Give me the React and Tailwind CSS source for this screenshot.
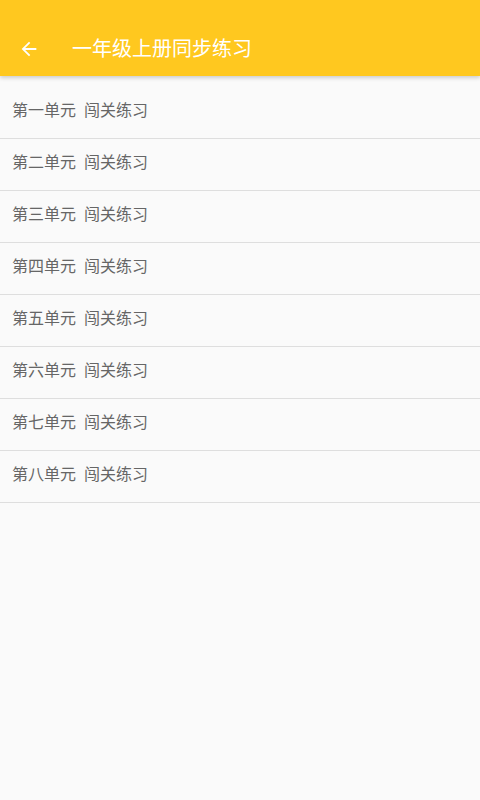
const units = ["一", "二", "三", "四", "五", "六", "七", "八"];

function BackArrow() {
  return (
    <svg viewBox="0 0 24 24" className="w-[22px] h-[22px]" fill="white">
      <path d="M20 11H7.83l5.59-5.59L12 4l-8 8 8 8 1.41-1.41L7.83 13H20v-2z" />
    </svg>
  );
}

export default function App() {
  return (
    <div
      className="w-[480px] h-[800px] bg-[#fafafa] flex flex-col"
      style={{ fontFamily: '"Noto Sans CJK SC", "Noto Sans", sans-serif' }}
    >
      {/* Toolbar */}
      <div className="h-[76px] pt-[20px] bg-[#ffc81f] flex items-center shadow-[0_2px_4px_rgba(0,0,0,0.18)] relative z-10 shrink-0">
        <div className="w-[72px] pl-[18px] pt-[2px] flex items-center">
          <BackArrow />
        </div>
        <div className="text-white text-[20px] leading-none">一年级上册同步练习</div>
      </div>

      {/* Unit list */}
      <div className="pt-[11px] flex flex-col">
        {units.map((u) => (
          <div
            key={u}
            className="h-[52px] border-b border-[#dedede] flex items-center pl-[12px] pb-[8px] text-[16px] text-[#666666]"
          >
            <span>第{u}单元</span>
            <span className="ml-[8px]">闯关练习</span>
          </div>
        ))}
      </div>
    </div>
  );
}
